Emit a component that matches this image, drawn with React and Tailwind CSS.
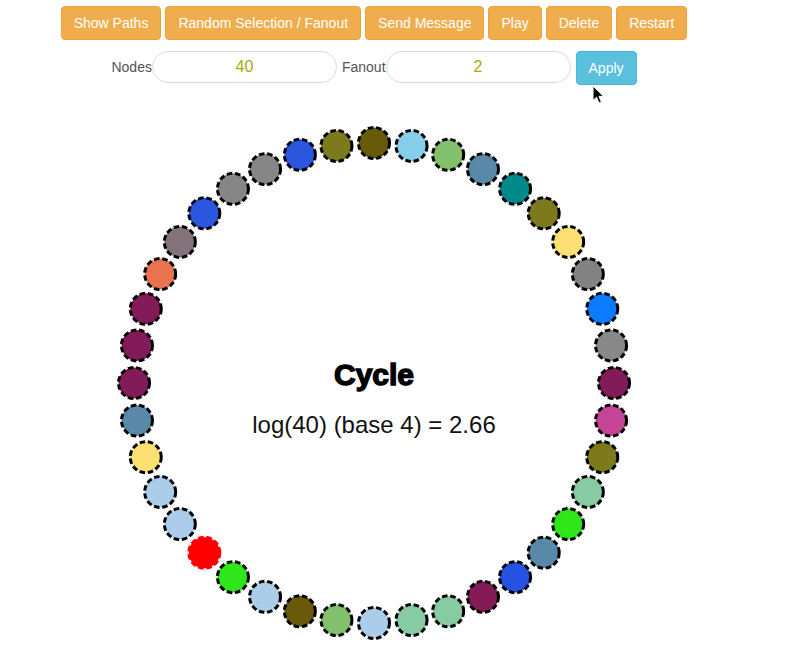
import React from "react";

const COLORS = [
  "#695a0b", "#87ceeb", "#82c06c", "#5a88a8", "#008b8b", "#7d7a1e", "#fde074", "#828282",
  "#0b7cff", "#888888", "#841b59", "#c64496", "#7d7a1e", "#86cba1", "#2ee61a", "#5a88a8",
  "#2552e0", "#841b59", "#86cba1", "#86cba1", "#abcde9", "#82c06c", "#695a0b", "#abcde9",
  "#2ee61a", "#ff0000", "#abcde9", "#abcde9", "#fde074", "#5a88a8", "#841b59", "#841b59",
  "#841b59", "#e8744f", "#84737a", "#2a56e0", "#868686", "#868686", "#2a56e0", "#7d7a1e",
];

const buttons = ["Show Paths", "Random Selection / Fanout", "Send Message", "Play", "Delete", "Restart"];

export default function App() {
  const cx = 374;
  const cy = 293;
  const R = 240;
  return (
    <div className="relative w-[748px] bg-white" style={{ fontFamily: '"Liberation Sans", Arial, sans-serif' }}>
      <div className="flex justify-center gap-[4px] pt-[6px]">
        {buttons.map((b) => (
          <button
            key={b}
            className="h-[34px] rounded-[4px] border border-[#eea236] bg-[#f0ad4e] px-[12px] text-[14px] leading-[20px] text-white"
          >
            {b}
          </button>
        ))}
      </div>
      <div className="mt-[11px] flex items-start justify-center">
        <span className="mt-[8px] text-[14px] leading-[16px] text-[#555]">Nodes</span>
        <div className="flex h-[32px] w-[185px] items-center justify-center rounded-[16px] border border-[#dcdcdc] text-[16px] text-[#a8aa14]">
          40
        </div>
        <span className="ml-[5px] mt-[8px] text-[14px] leading-[16px] text-[#555]">Fanout</span>
        <div className="flex h-[32px] w-[185px] items-center justify-center rounded-[16px] border border-[#dcdcdc] text-[16px] text-[#a8aa14]">
          2
        </div>
        <button className="ml-[5px] h-[34px] w-[61px] rounded-[4px] border border-[#46b8da] bg-[#5bc0de] text-[14px] text-white">
          Apply
        </button>
      </div>
      <svg width="748" height="561" className="mt-[5px] block">
        {COLORS.map((c, i) => {
          const a = ((-90 + i * 9) * Math.PI) / 180;
          const x = cx + R * Math.cos(a);
          const y = cy + R * Math.sin(a);
          return (
            <circle
              key={i}
              cx={x}
              cy={y}
              r={15.5}
              fill={c}
              stroke={c === "#ff0000" ? "#ff0000" : "#000"}
              strokeWidth={3}
              strokeDasharray="5.5 2.8"
            />
          );
        })}
        <text
          x={cx}
          y={cy + 2}
          textAnchor="middle"
          fontFamily='"Liberation Sans", Arial, sans-serif'
          fontWeight="bold"
          fontSize="30"
          fill="#000"
          stroke="#000"
          strokeWidth="1.4"
        >
          Cycle
        </text>
        <text
          x={cx}
          y={cy + 50}
          textAnchor="middle"
          fontFamily='"Liberation Sans", Arial, sans-serif'
          fontSize="24"
          fill="#111"
        >
          log(40) (base 4) = 2.66
        </text>
      </svg>
      <svg className="absolute left-[592px] top-[85px]" width="14" height="20" viewBox="0 0 14 20">
        <path d="M1 1 L1 15.5 L4.5 12.2 L7 18 L9.4 17 L7 11.3 L11.6 11.3 Z" fill="#000" stroke="#fff" strokeWidth="1" />
      </svg>
    </div>
  );
}
